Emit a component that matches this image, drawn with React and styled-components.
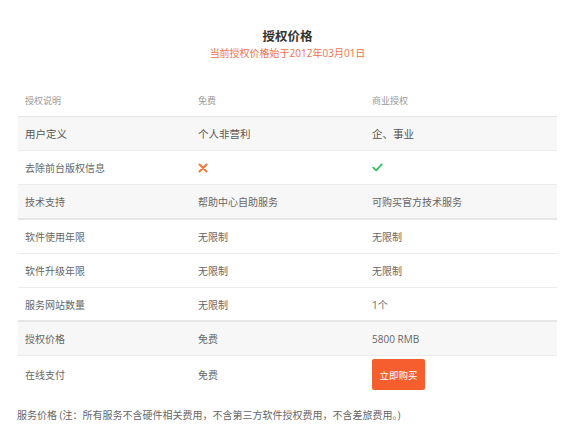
import styled, { createGlobalStyle } from 'styled-components';

const GlobalStyle = createGlobalStyle`
  body {
    margin: 0;
    background: #fff;
    font-family: "Open Sans", "Noto Sans CJK SC", sans-serif;
  }
`;

const Page = styled.div`
  width: 568px;
  padding: 28px 11px 0 18px;
  box-sizing: border-box;
`;

const Heading = styled.div`
  text-align: center;
  margin-bottom: 24px;
`;

const Title = styled.h2`
  margin: 0;
  font-size: 12.5px;
  line-height: 18px;
  font-weight: 700;
  color: #333;
`;

const Subtitle = styled.p`
  margin: 0;
  font-size: 10px;
  line-height: 15px;
  color: #f4704d;
`;

const Table = styled.div`
  width: 539px;
`;

const Row = styled.div`
  display: grid;
  grid-template-columns: 173px 174px 1fr;
  align-items: center;
  height: ${p => p.tall ? '37px' : '34.2px'};
  box-sizing: border-box;
  background: ${p => p.shaded ? '#f7f7f7' : '#fff'};
  border-bottom: ${p => p.last ? 'none' : p.thick ? '2px solid #e6e6e6' : '1px solid #ececec'};
`;

const HeadRow = styled(Row)`
  height: 32px;
  border-bottom: 1px solid #e6e6e6;
`;

const Cell = styled.div`
  padding-left: 7px;
  color: ${p => p.head ? '#9a9a9a' : p.strong ? '#555' : '#666'};
  font-size: ${p => p.head ? '9px' : p.strong ? '10.5px' : '10px'};
  display: flex;
  align-items: center;
`;

const BuyButton = styled.button`
  border: none;
  background: #f65f2d;
  color: #fff;
  font-family: inherit;
  font-size: 9.5px;
  width: 53px;
  height: 31px;
  border-radius: 2px;
  padding: 0;
  cursor: pointer;
`;

const Note = styled.p`
  margin: 14px 0 0 -1px;
  font-size: 10px;
  color: #666;
`;

const Cross = () => (
  <svg width="10" height="10" viewBox="0 0 10 10">
    <path d="M1.5 1.5 L8.5 8.5 M8.5 1.5 L1.5 8.5" stroke="#f5792f" strokeWidth="2" strokeLinecap="round" />
  </svg>
);

const Check = () => (
  <svg width="11" height="9" viewBox="0 0 11 9">
    <path d="M1.2 4.6 L4.2 7.4 L9.8 1.4" fill="none" stroke="#35c25c" strokeWidth="1.8" strokeLinecap="round" strokeLinejoin="round" />
  </svg>
);

const rows = [
  { label: '用户定义', free: '个人非营利', biz: '企、事业', shaded: true, strong: true },
  { label: '去除前台版权信息', free: <Cross />, biz: <Check /> },
  { label: '技术支持', free: '帮助中心自助服务', biz: '可购买官方技术服务', shaded: true, thick: true },
  { label: '软件使用年限', free: '无限制', biz: '无限制' },
  { label: '软件升级年限', free: '无限制', biz: '无限制' },
  { label: '服务网站数量', free: '无限制', biz: '1个', thick: true },
  { label: '授权价格', free: '免费', biz: '5800 RMB', shaded: true },
];

export default function App() {
  return (
    <>
      <GlobalStyle />
      <Page>
        <Heading>
          <Title>授权价格</Title>
          <Subtitle>当前授权价格始于2012年03月01日</Subtitle>
        </Heading>
        <Table>
          <HeadRow>
            <Cell head>授权说明</Cell>
            <Cell head>免费</Cell>
            <Cell head>商业授权</Cell>
          </HeadRow>
          {rows.map(r => (
            <Row key={r.label} shaded={r.shaded} thick={r.thick}>
              <Cell strong={r.strong}>{r.label}</Cell>
              <Cell strong={r.strong}>{r.free}</Cell>
              <Cell strong={r.strong}>{r.biz}</Cell>
            </Row>
          ))}
          <Row tall last>
            <Cell>在线支付</Cell>
            <Cell>免费</Cell>
            <Cell><BuyButton>立即购买</BuyButton></Cell>
          </Row>
        </Table>
        <Note>服务价格 (注：所有服务不含硬件相关费用，不含第三方软件授权费用，不含差旅费用。)</Note>
      </Page>
    </>
  );
}
